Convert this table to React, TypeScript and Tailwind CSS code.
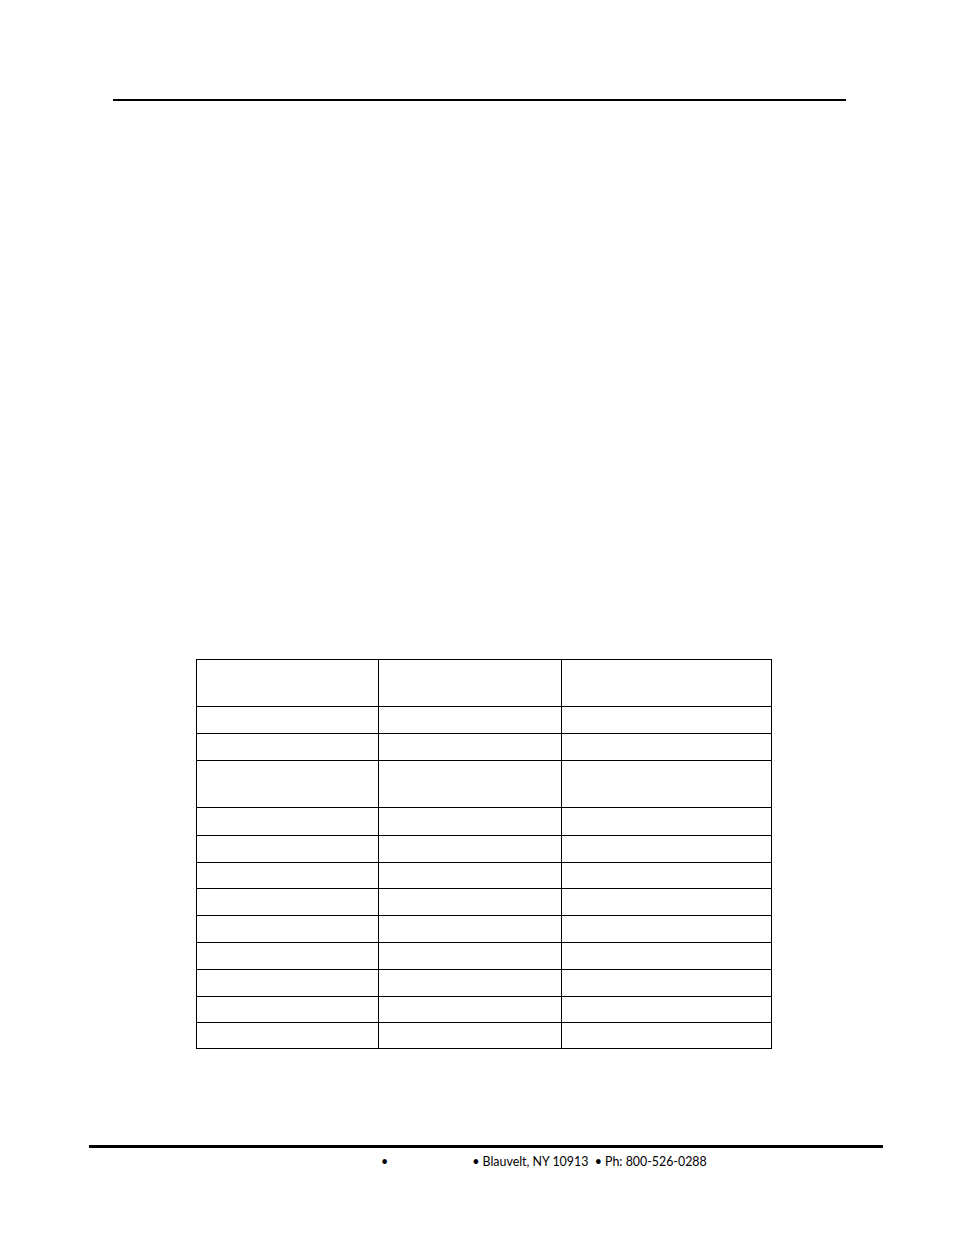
const rowHeights = [46, 27, 27, 47, 28, 27, 26, 27, 27, 27, 27, 26, 26];

export default function App() {
  return (
    <div className="w-[954px] h-[1235px] bg-white relative" style={{ fontFamily: 'Lato, "Open Sans", sans-serif' }}>
      {/* header rule */}
      <div className="pt-[99px] pl-[113px]">
        <div className="w-[733px] h-[2px] bg-black" />
      </div>

      {/* empty table */}
      <div className="pl-[196px] pt-[558px]">
        <div className="w-[576px] border border-black">
          {rowHeights.map((h, i) => (
            <div
              key={i}
              className={`flex ${i === 0 ? '' : 'border-t border-black'}`}
              style={{ height: h }}
            >
              <div className="w-[181px]" />
              <div className="w-[183px] border-l border-black" />
              <div className="flex-1 border-l border-black" />
            </div>
          ))}
        </div>
      </div>

      {/* footer */}
      <div className="pl-[89px] pt-[96px]">
        <div className="w-[794px] h-[3px] bg-black" />
        <div className="flex items-center text-[12.4px] text-black leading-none mt-[8px]">
          <span className="ml-[292px]">•</span>
          <span className="ml-[84px]">• Blauvelt, NY 10913&nbsp; • Ph: 800-526-0288</span>
        </div>
      </div>
    </div>
  );
}
